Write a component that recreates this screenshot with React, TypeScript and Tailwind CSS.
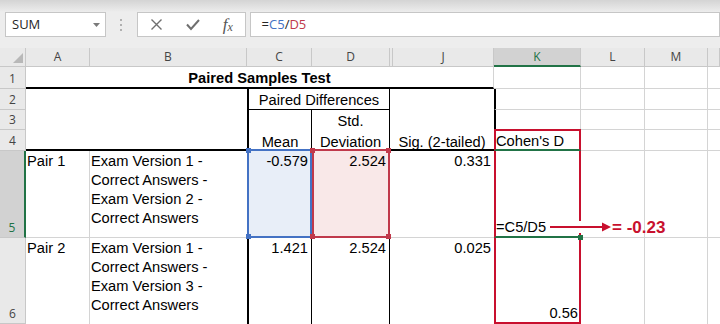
import React from "react";

const hdr =
  "flex items-center justify-center bg-[#e9e9e9] border-r border-b border-[#c8c8c8] text-[12px] text-[#444] font-['Open_Sans',sans-serif]";
const rowHdr =
  "col-start-1 flex items-end justify-center pb-[2px] leading-[14px] bg-[#e9e9e9] border-r border-b border-[#c8c8c8] text-[12px] text-[#444] font-['Open_Sans',sans-serif]";
const grid = "border-r border-b border-[#d4d4d4]";
const gridB = "border-b border-[#d4d4d4]";

function Toolbar() {
  return (
    <div className="h-[48px] bg-[#ededed] overflow-hidden">
      <div className="h-[12px] bg-gradient-to-b from-[#d4d4d4] to-[#ededed]" />
      <div className="flex h-[25px] pl-[5px] font-['Open_Sans',sans-serif]">
        <div className="w-[101px] flex items-center justify-between bg-white border border-[#c6c6c6] pl-[6px] pr-[5px]">
          <span className="text-[13px] text-[#262626]">SUM</span>
          <svg width="7" height="4" viewBox="0 0 7 4">
            <polygon points="0,0 7,0 3.5,4" fill="#7a7a7a" />
          </svg>
        </div>
        <div className="w-[31px] flex flex-col items-center justify-center gap-[3px]">
          <div className="w-[2px] h-[2px] bg-[#b0b0b0]" />
          <div className="w-[2px] h-[2px] bg-[#b0b0b0]" />
          <div className="w-[2px] h-[2px] bg-[#b0b0b0]" />
        </div>
        <div className="w-[109px] flex items-center bg-white border border-[#c6c6c6] pl-[1px]">
          <div className="w-[37px] flex items-center justify-center">
            <svg width="11" height="11" viewBox="0 0 11 11">
              <path d="M0.5 0.5 L10.5 10.5 M10.5 0.5 L0.5 10.5" stroke="#6f6f6f" strokeWidth="1.4" fill="none" />
            </svg>
          </div>
          <div className="w-[36px] flex items-center justify-center">
            <svg width="14" height="12" viewBox="0 0 14 12">
              <path d="M1 5.5 L5 10 L13 1" stroke="#6f6f6f" strokeWidth="2" fill="none" />
            </svg>
          </div>
          <div className="w-[34px] flex items-center justify-center font-['Liberation_Serif',serif] italic text-[#555]">
            <span className="text-[17px] leading-none">f</span>
            <span className="text-[12px] leading-none mt-[4px]">x</span>
          </div>
        </div>
        <div className="w-[472px] ml-[4px] flex items-center bg-white border border-[#c6c6c6] pl-[11px] text-[13px] text-[#262626]">
          <span>=</span>
          <span className="text-[#4472c4]">C5</span>
          <span>/</span>
          <span className="text-[#c0394b]">D5</span>
        </div>
      </div>
    </div>
  );
}

function Sheet() {
  return (
    <div className="grid grid-cols-[26px_64px_157px_65px_78px_104px_87px_64px_63px_12px] grid-rows-[19px_22px_21px_20px_21px_87px_86px] text-[14.67px] font-['Liberation_Sans',Arial,sans-serif] text-black">
      {/* column headers */}
      <div className="col-start-1 row-start-1 flex items-end justify-end pr-[2px] pb-[3px] bg-[#e9e9e9] border-r border-b border-[#c8c8c8]">
        <svg width="10" height="10" viewBox="0 0 10 10">
          <polygon points="10,0 10,10 0,10" fill="#b8b8b8" />
        </svg>
      </div>
      <div className={`col-start-2 row-start-1 ${hdr}`}>A</div>
      <div className={`col-start-3 row-start-1 ${hdr}`}>B</div>
      <div className={`col-start-4 row-start-1 ${hdr}`}>C</div>
      <div className={`col-start-5 row-start-1 ${hdr}`}>D</div>
      <div className="col-start-6 row-start-1 flex bg-[#e9e9e9] border-r border-b border-[#c8c8c8] text-[12px] text-[#444] font-['Open_Sans',sans-serif]">
        <div className="w-[3px] border-r border-[#c8c8c8]" />
        <div className="flex-1 flex items-center justify-center">J</div>
      </div>
      <div className="col-start-7 row-start-1 flex items-center justify-center bg-[#d2d2d2] border-r border-r-[#c8c8c8] border-b-2 border-b-[#217346] text-[12px] text-[#217346] font-['Open_Sans',sans-serif]">
        K
      </div>
      <div className={`col-start-8 row-start-1 ${hdr}`}>L</div>
      <div className={`col-start-9 row-start-1 ${hdr}`}>M</div>
      <div className={`col-start-10 row-start-1 ${hdr}`} />

      {/* row headers */}
      <div className={`row-start-2 ${rowHdr}`}>1</div>
      <div className={`row-start-3 ${rowHdr}`}>2</div>
      <div className={`row-start-4 ${rowHdr}`}>3</div>
      <div className={`row-start-5 ${rowHdr}`}>4</div>
      <div className="col-start-1 row-start-6 flex items-end justify-center pb-[2px] leading-[14px] bg-[#d2d2d2] border-b border-b-[#c8c8c8] border-r-2 border-r-[#217346] text-[12px] text-[#217346] font-['Open_Sans',sans-serif]">
        5
      </div>
      <div className={`row-start-7 ${rowHdr}`}>6</div>

      {/* row 1 */}
      <div className="col-start-2 col-span-5 row-start-2 flex items-end justify-center border-r border-r-[#d4d4d4] border-b-2 border-b-black font-bold leading-[17px]">
        Paired Samples Test
      </div>
      <div className={`col-start-7 row-start-2 ${grid}`} />
      <div className={`col-start-8 row-start-2 ${grid}`} />
      <div className={`col-start-9 row-start-2 ${grid}`} />
      <div className={`col-start-10 row-start-2 ${gridB}`} />

      {/* rows 2-4 */}
      <div className="col-start-2 col-span-2 row-start-3 row-span-3 border-b-2 border-black" />
      <div className="col-start-4 col-span-2 row-start-3 flex items-end justify-center leading-[17px] border-l-2 border-l-black border-r border-r-black border-b border-b-black">
        Paired Differences
      </div>
      <div className="col-start-6 row-start-3 row-span-3 flex items-end justify-center leading-[14px] border-b-2 border-black">
        Sig. (2-tailed)
      </div>
      <div className="col-start-7 row-start-3 border-l-2 border-l-black border-r border-b border-r-[#d4d4d4] border-b-[#d4d4d4]" />
      <div className={`col-start-8 row-start-3 ${grid}`} />
      <div className={`col-start-9 row-start-3 ${grid}`} />
      <div className={`col-start-10 row-start-3 ${gridB}`} />

      <div className="col-start-4 row-start-4 border-l-2 border-l-black border-r border-r-black" />
      <div className="col-start-5 row-start-4 flex items-end justify-center leading-[17px] border-r border-r-black">
        Std.
      </div>
      <div className="col-start-7 row-start-4 border-l-2 border-l-black border-r border-b border-r-[#d4d4d4] border-b-[#d4d4d4]" />
      <div className={`col-start-8 row-start-4 ${grid}`} />
      <div className={`col-start-9 row-start-4 ${grid}`} />
      <div className={`col-start-10 row-start-4 ${gridB}`} />

      <div className="col-start-4 row-start-5 flex items-end justify-center leading-[14px] border-l-2 border-l-black border-r border-r-black border-b-2 border-b-black">
        Mean
      </div>
      <div className="col-start-5 row-start-5 flex items-end justify-center leading-[14px] border-r border-r-black border-b-2 border-b-black">
        Deviation
      </div>
      <div className="col-start-7 row-start-5 -mt-[1px] flex items-end leading-[16px] border-2 border-[#c8102e] border-b-[#217346]">
        Cohen's D
      </div>
      <div className={`col-start-8 row-start-5 ${grid}`} />
      <div className={`col-start-9 row-start-5 ${grid}`} />
      <div className={`col-start-10 row-start-5 ${gridB}`} />

      {/* row 5 */}
      <div className={`col-start-2 row-start-6 pl-[1px] pt-[1px] leading-[19px] ${grid}`}>Pair 1</div>
      <div className={`col-start-3 row-start-6 pl-[1px] pt-[1px] leading-[19px] ${gridB}`}>
        Exam Version 1 -<br />
        Correct Answers -<br />
        Exam Version 2 -<br />
        Correct Answers
      </div>
      <div className="col-start-4 row-start-6 -mt-[2px] relative border-2 border-[#4472c4] bg-[#e8eef8] text-right pr-[2px] pt-[1px] leading-[19px]">
        -0.579
        <div className="absolute -left-[3px] -top-[3px] w-[5px] h-[5px] bg-[#4472c4]" />
        <div className="absolute -left-[3px] -bottom-[3px] w-[5px] h-[5px] bg-[#4472c4]" />
      </div>
      <div className="col-start-5 row-start-6 -mt-[2px] relative border-2 border-[#c0394b] bg-[#f9e8e8] text-right pr-[2px] pt-[1px] leading-[19px]">
        2.524
        <div className="absolute -left-[4px] -top-[3px] w-[5px] h-[5px] bg-[#c0394b]" />
        <div className="absolute -right-[3px] -top-[3px] w-[5px] h-[5px] bg-[#c0394b]" />
        <div className="absolute -left-[4px] -bottom-[3px] w-[5px] h-[5px] bg-[#c0394b]" />
        <div className="absolute -right-[3px] -bottom-[3px] w-[5px] h-[5px] bg-[#c0394b]" />
      </div>
      <div className={`col-start-6 row-start-6 text-right pr-[3px] pt-[1px] leading-[19px] ${gridB}`}>0.331</div>
      <div className="col-start-7 row-start-6 flex items-end leading-[17px] border-x-2 border-x-[#c8102e] border-b-2 border-b-[#217346]">
        =C5/D5
      </div>
      <div className={`col-start-8 row-start-6 ${grid}`} />
      <div className={`col-start-9 row-start-6 ${grid}`} />
      <div className={`col-start-10 row-start-6 ${gridB}`} />

      {/* row 6 */}
      <div className="col-start-2 row-start-7 pl-[1px] pt-[1px] leading-[19px] border-r border-[#d4d4d4]">Pair 2</div>
      <div className="col-start-3 row-start-7 pl-[1px] pt-[1px] leading-[19px]">
        Exam Version 1 -<br />
        Correct Answers -<br />
        Exam Version 3 -<br />
        Correct Answers
      </div>
      <div className="col-start-4 row-start-7 text-right pr-[3px] pt-[1px] leading-[19px] border-l-2 border-l-black border-r border-r-black">
        1.421
      </div>
      <div className="col-start-5 row-start-7 text-right pr-[3px] pt-[1px] leading-[19px] border-r border-r-black">2.524</div>
      <div className="col-start-6 row-start-7 text-right pr-[3px] pt-[1px] leading-[19px]">0.025</div>
      <div className="col-start-7 row-start-7 flex items-end justify-end pr-[1px] leading-[17px] border-x-2 border-b-2 border-[#c8102e]">
        0.56
      </div>
      <div className="col-start-8 row-start-7 border-r border-[#d4d4d4]" />
      <div className="col-start-9 row-start-7 border-r border-[#d4d4d4]" />
      <div className="col-start-10 row-start-7" />
    </div>
  );
}

export default function App() {
  return (
    <div className="relative w-[720px] h-[324px] overflow-hidden bg-white">
      <Toolbar />
      <Sheet />
      {/* annotation overlay */}
      <div className="absolute left-[576px] top-[221px] w-[10px] h-[12px] bg-white" />
      <svg className="absolute left-[548px] top-[221px]" width="64" height="13" viewBox="0 0 64 13">
        <line x1="2" y1="6" x2="56" y2="6" stroke="#c8102e" strokeWidth="2" />
        <polygon points="54,1.5 63,6 54,10.5" fill="#c8102e" />
      </svg>
      <div className="absolute left-[612px] top-[219px] font-['Liberation_Sans',Arial,sans-serif] font-bold text-[17px] leading-[17px] text-[#c8102e]">
        = -0.23
      </div>
      <div className="absolute left-[578px] top-[235px] w-[5px] h-[5px] bg-[#217346]" />
    </div>
  );
}
